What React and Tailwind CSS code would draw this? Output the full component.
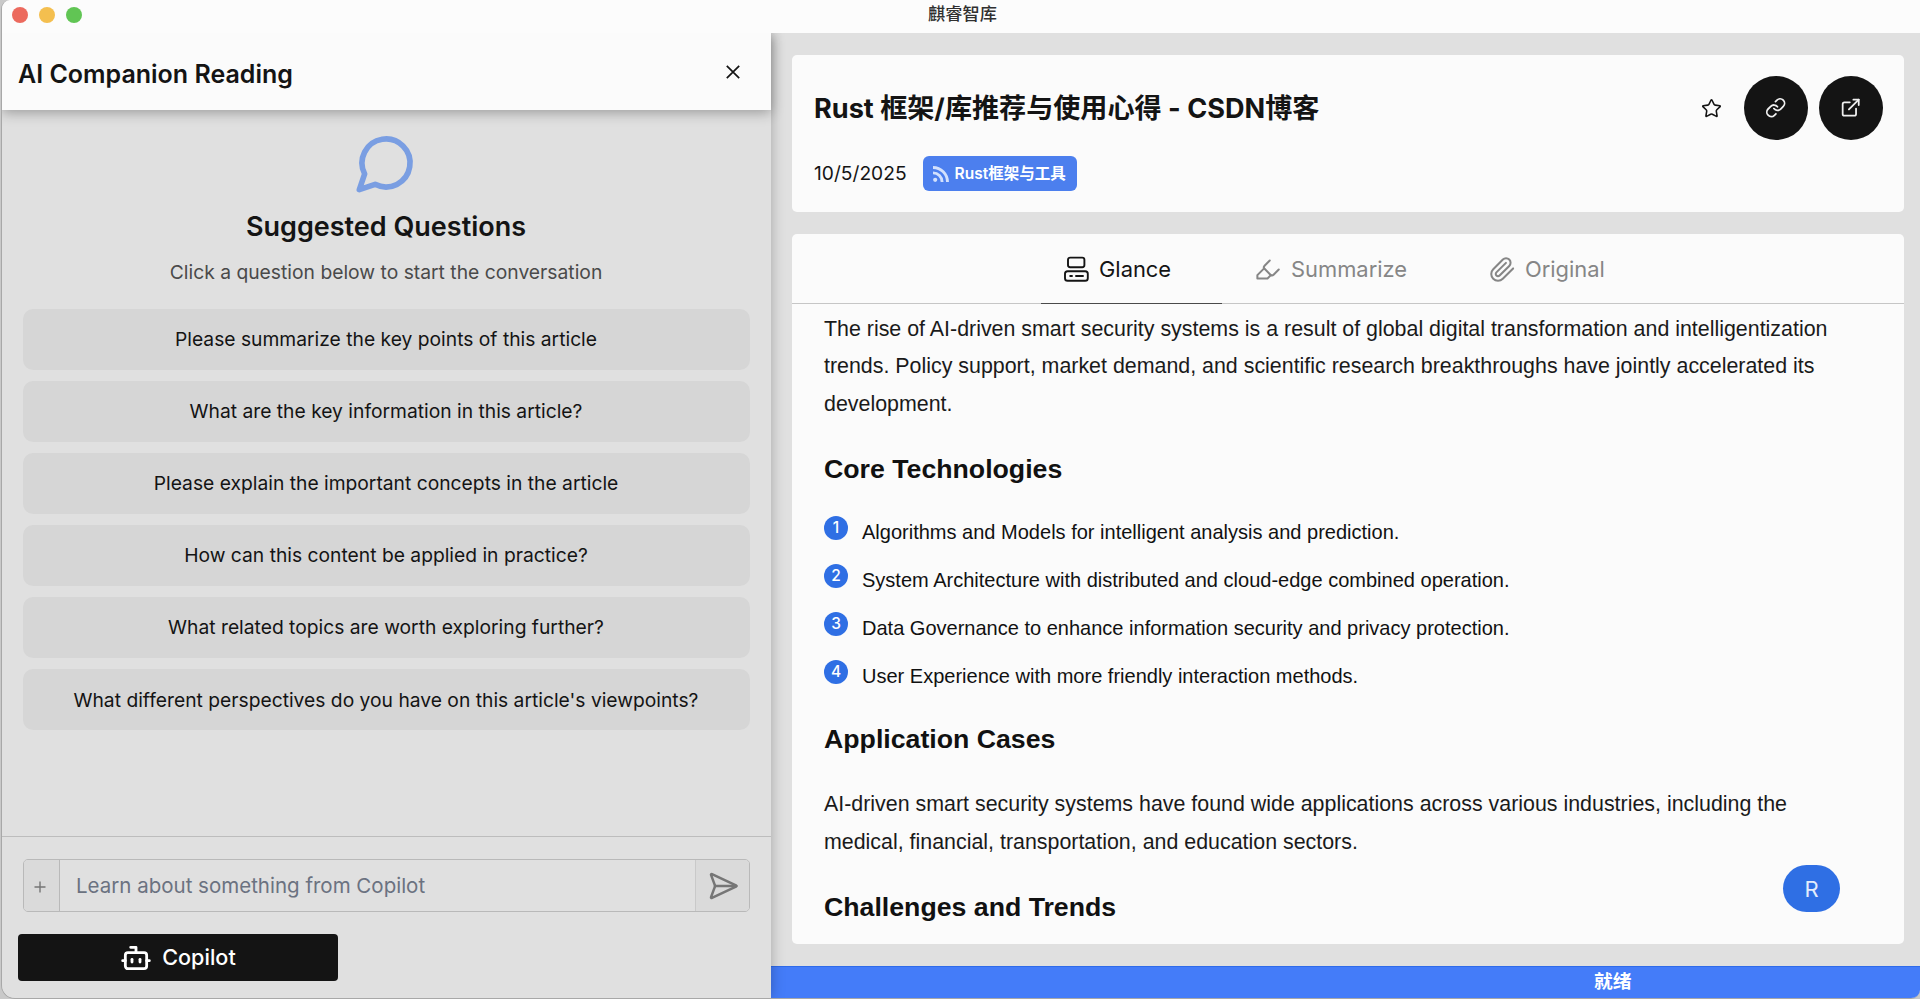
import { Bot, ExternalLink, Highlighter, Link, SendHorizontal, Star } from "lucide-react";

const questions = [
  "Please summarize the key points of this article",
  "What are the key information in this article?",
  "Please explain the important concepts in the article",
  "How can this content be applied in practice?",
  "What related topics are worth exploring further?",
  "What different perspectives do you have on this article's viewpoints?",
];

const technologies = [
  "Algorithms and Models for intelligent analysis and prediction.",
  "System Architecture with distributed and cloud-edge combined operation.",
  "Data Governance to enhance information security and privacy protection.",
  "User Experience with more friendly interaction methods.",
];

function BubbleIcon() {
  return (
    <svg className="size-16 shrink-0 text-[#7a9ee2]" viewBox="0 0 24 24" fill="none" stroke="currentColor" strokeWidth="2.1" strokeLinecap="round" strokeLinejoin="round">
      <path d="M7.9 20A9 9 0 1 0 4 16.1L2 22Z" />
    </svg>
  );
}

function CloseIcon() {
  return (
    <svg className="size-[14px]" viewBox="0 0 14 14" fill="none" stroke="currentColor" strokeWidth="1.7">
      <path d="M0.8 0.8 13.2 13.2M13.2 0.8 0.8 13.2" />
    </svg>
  );
}

function PlusIcon() {
  return (
    <svg className="size-[12px]" viewBox="0 0 12 12" fill="none" stroke="currentColor" strokeWidth="1.4">
      <path d="M6 0.5V11.5M0.5 6H11.5" />
    </svg>
  );
}

function GlanceIcon() {
  return (
    <svg className="size-[27px] shrink-0" viewBox="0 0 27 27" fill="none" stroke="currentColor" strokeWidth="1.9" strokeLinecap="round">
      <rect x="5" y="1.6" width="16.4" height="9.6" rx="2.2" />
      <rect x="2" y="15.2" width="22.8" height="9.6" rx="2.6" />
      <path d="M7.2 20h1.8M13 20h7" />
    </svg>
  );
}

function ClipIcon() {
  return (
    <svg className="size-[27px] shrink-0" viewBox="0 0 24 24" fill="none" stroke="currentColor" strokeWidth="1.8" strokeLinecap="round" strokeLinejoin="round">
      <path d="m21.44 11.05-9.19 9.19a6 6 0 0 1-8.49-8.49l8.57-8.57A4 4 0 1 1 18 8.84l-8.59 8.57a2 2 0 0 1-2.83-2.83l8.49-8.48" />
    </svg>
  );
}

function FeedIcon() {
  return (
    <svg className="size-4 shrink-0 text-[#d3e1fc]" viewBox="0 0 16 16" fill="none" stroke="currentColor" strokeWidth="2.9">
      <circle cx="2.2" cy="13.8" r="2.1" fill="currentColor" stroke="none" />
      <path d="M0 6.9A9.1 9.1 0 0 1 9.1 16M0 1.5A14.5 14.5 0 0 1 14.5 16" />
    </svg>
  );
}

function TitleBar() {
  return (
    <header className="relative z-20 flex h-[33px] shrink-0 items-center bg-[#fcfcfc]">
      <div className="flex w-[120px] gap-[11px] pb-[4px] pl-[10px]">
        <span className="size-4 rounded-full bg-[#ec6a5e]" />
        <span className="size-4 rounded-full bg-[#f4bf4f]" />
        <span className="size-4 rounded-full bg-[#61c554]" />
      </div>
      <h1 className="flex-1 pr-[117px] pb-[7px] text-center font-['Noto_Sans_CJK_SC',sans-serif] text-[17.2px] leading-6 font-medium text-[#303030]">
        麒睿智库
      </h1>
    </header>
  );
}

function Companion() {
  return (
    <aside className="relative z-10 flex w-[769px] shrink-0 flex-col bg-[#e0e0e0] shadow-[0_0_13px_rgba(0,0,0,0.28)]">
      <div className="flex h-[77px] shrink-0 items-center justify-between bg-[#fbfbfb] pr-[31px] pl-[16px] shadow-[0_3px_12px_rgba(0,0,0,0.3)]">
        <h2 className="pt-[5px] text-[25px] leading-8 font-semibold">AI Companion Reading</h2>
        <CloseIcon />
      </div>
      <div className="flex flex-1 flex-col items-center pt-[21px] pr-[21.5px] pl-[20.5px]">
        <BubbleIcon />
        <h3 className="mt-3 text-[27px] leading-10 font-semibold">Suggested Questions</h3>
        <p className="mt-[11px] text-[19.3px] leading-7 text-[#4a4a4a]">Click a question below to start the conversation</p>
        <ul className="mt-[23px] flex w-full flex-col gap-[11.1px]">
          {questions.map((q) => (
            <li key={q} className="flex h-[61px] items-center justify-center rounded-[10px] bg-[#d6d6d6] text-[19.25px]">
              {q}
            </li>
          ))}
        </ul>
      </div>
      <div className="h-[162px] shrink-0 border-t border-[#bdbdbd] pt-[22px]">
        <div className="mr-[21px] ml-[21px] flex h-[53px] overflow-hidden rounded-[5px] border border-[#b9b9b9]">
          <button className="flex w-[36px] items-center justify-center border-r border-[#b9b9b9] bg-[#dadada] pt-[3px] pr-[3px] text-[#757575]">
            <PlusIcon />
          </button>
          <div className="flex flex-1 items-center pt-px pl-[16px] text-[20.5px] text-[#6b7280]">Learn about something from Copilot</div>
          <button className="flex w-[54px] items-center justify-center border-l border-[#c9c9c9] bg-[#dadada] text-[#767676]">
            <SendHorizontal size={32} strokeWidth={1.9} />
          </button>
        </div>
        <button className="mt-[22px] ml-[16px] flex h-[47px] w-[320px] items-center justify-center gap-[10px] rounded-[4px] bg-[#141414] text-[21.6px] font-medium text-white">
          <Bot size={32} strokeWidth={2.1} />
          Copilot
        </button>
      </div>
    </aside>
  );
}

function ArticleHeader() {
  return (
    <section className="flex h-[157px] shrink-0 flex-col rounded-[5px] bg-[#fbfbfb] pt-[21px] pr-[21px] pl-[22px]">
      <div className="flex h-16 items-center">
        <h2 className="flex-1 pt-[2px] text-[27.1px] leading-10 font-bold">Rust 框架/库推荐与使用心得 - CSDN博客</h2>
        <Star size={21} strokeWidth={1.8} strokeLinejoin="miter" className="mr-[22px]" />
        <button className="mr-[11px] flex size-16 items-center justify-center rounded-full bg-[#141414] text-[#f0f0f0]">
          <Link size={21.4} strokeWidth={2} />
        </button>
        <button className="flex size-16 items-center justify-center rounded-full bg-[#141414] text-[#f0f0f0]">
          <ExternalLink size={21.4} strokeWidth={2} />
        </button>
      </div>
      <div className="mt-[16px] flex h-[35px] items-center gap-4">
        <span className="text-[19.2px]">10/5/2025</span>
        <span className="flex h-[35px] w-[154px] items-center gap-[6px] rounded-[6px] bg-[#4c7fee] pl-[10px] text-[15.5px] font-semibold whitespace-nowrap text-white">
          <FeedIcon />
          Rust框架与工具
        </span>
      </div>
    </section>
  );
}

function Tabs() {
  return (
    <nav className="flex h-[70px] shrink-0 justify-center gap-[10px] border-b border-[#c6c6c6] text-[21.9px] text-[#868686]">
      <div className="-mb-px flex w-[181px] items-center gap-[9px] border-b border-[#4a4a4a] pt-[2px] pl-[22px] text-[#141414]">
        <GlanceIcon />
        Glance
      </div>
      <div className="flex w-[225px] items-center gap-[10px] pt-[2px] pl-[22px]">
        <Highlighter size={27} strokeWidth={1.8} />
        Summarize
      </div>
      <div className="flex w-[188px] items-center gap-[9px] pt-[2px] pl-[22px]">
        <ClipIcon />
        Original
      </div>
    </nav>
  );
}

function Article() {
  return (
    <section className="mt-[22px] flex h-[710px] shrink-0 flex-col rounded-[5px] bg-[#fbfbfb]">
      <Tabs />
      <article className="relative flex-1 overflow-hidden pt-[7px] pl-[32px] font-['Liberation_Sans',Arial,sans-serif] text-[#1a1a1a]">
        <p className="w-[1020px] text-[21.4px] leading-[37.4px]">
          The rise of AI-driven smart security systems is a result of global digital transformation and intelligentization
          trends. Policy support, market demand, and scientific research breakthroughs have jointly accelerated its
          development.
        </p>
        <h3 className="mt-[27.8px] text-[26.7px] leading-9 font-bold text-[#111]">Core Technologies</h3>
        <ol className="mt-5 text-[20.03px] text-[#111]">
          {technologies.map((t, i) => (
            <li key={t} className="flex h-[48.1px] items-center gap-[14px]">
              <span className="mb-[7px] flex size-6 items-center justify-center rounded-full bg-[#2f6fe4] font-['Inter',sans-serif] text-[15.5px] leading-none font-medium text-white">
                {i + 1}
              </span>
              <span className="pt-px">{t}</span>
            </li>
          ))}
        </ol>
        <h3 className="mt-[22px] text-[26.7px] leading-9 font-bold text-[#111]">Application Cases</h3>
        <p className="mt-[28.8px] w-[1010px] text-[21.4px] leading-[37.4px]">
          AI-driven smart security systems have found wide applications across various industries, including the medical,
          financial, transportation, and education sectors.
        </p>
        <h3 className="mt-[28px] text-[26.7px] leading-9 font-bold text-[#111]">Challenges and Trends</h3>
        <button className="absolute right-[64px] bottom-[32px] flex h-[47px] w-[57px] items-center justify-center rounded-[24px] bg-[#2f6fe4] pt-[2px] font-['Inter',sans-serif] text-[22px] text-[#e2ecfc]">
          R
        </button>
      </article>
    </section>
  );
}

export default function App() {
  return (
    <div className="h-[999px] w-[1920px] overflow-hidden bg-[#c9c9c9] pl-px font-['Inter','Noto_Sans_CJK_SC',sans-serif] text-[#141414]">
      <div className="flex h-[999px] flex-col overflow-hidden rounded-tl-[9px] rounded-br-[9px] rounded-bl-[14px] border-b border-l border-[#a8a8a8] bg-[#e0e0e0]">
        <TitleBar />
        <div className="flex min-h-0 flex-1">
          <Companion />
          <div className="flex flex-1 flex-col">
            <main className="flex flex-1 flex-col pt-[22px] pr-[16px] pl-[21px]">
              <ArticleHeader />
              <Article />
            </main>
            <footer className="flex h-[32px] shrink-0 items-center border-t border-[#2f6bea] bg-[#447cf9] pl-[823px] text-[18.7px] font-semibold text-white">
              就绪
            </footer>
          </div>
        </div>
      </div>
    </div>
  );
}
